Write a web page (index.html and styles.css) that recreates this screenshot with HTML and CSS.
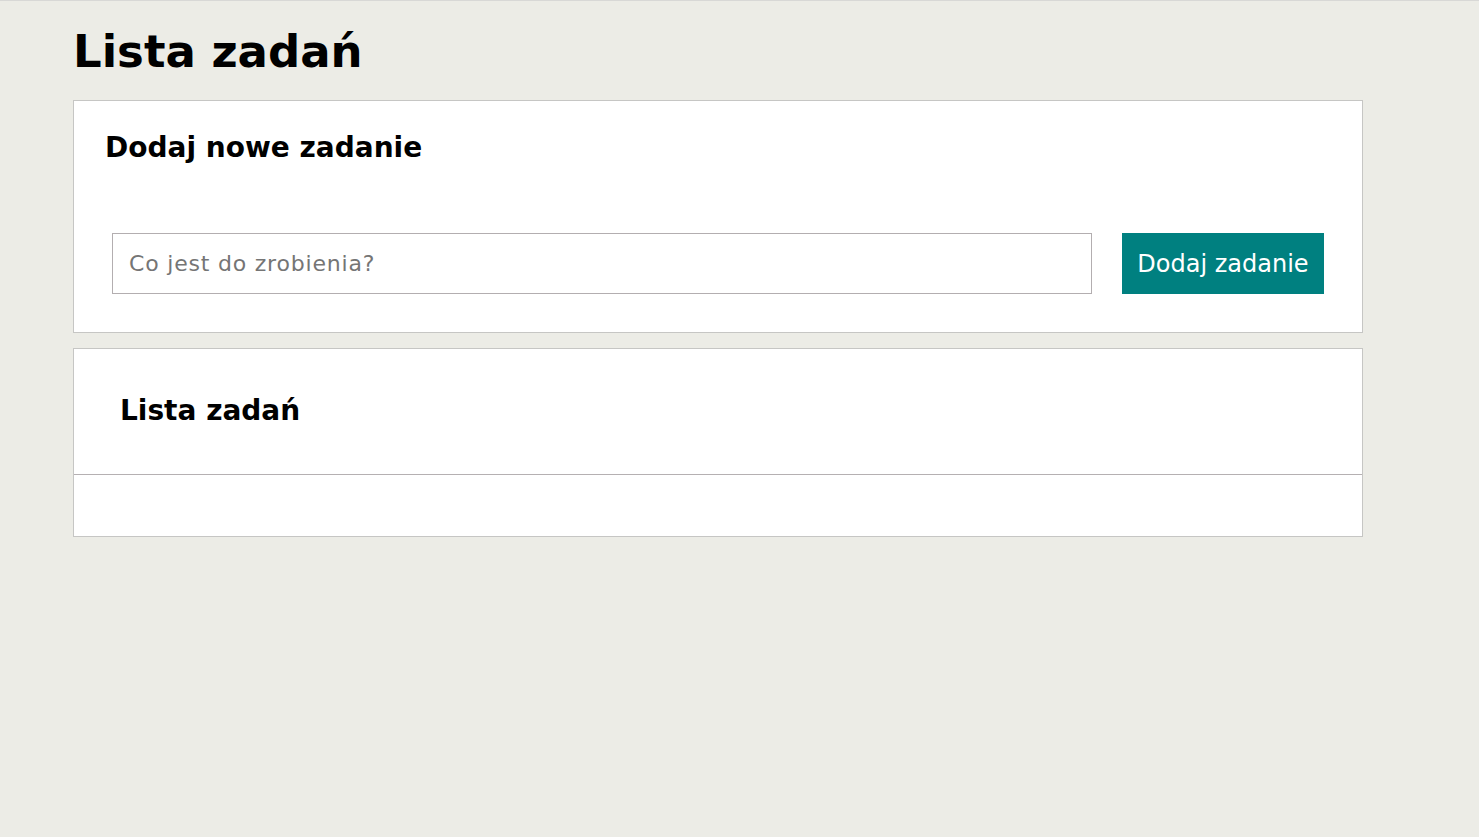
FILE: index.html
```html
<!DOCTYPE html>
<html lang="pl">
<head>
<meta charset="utf-8">
<title>Lista zadań</title>
<link rel="stylesheet" href="styles.css">
</head>
<body>
<main class="app">
  <h1 class="app-title">Lista zadań</h1>
  <section class="card add-card">
    <h2 class="card-title">Dodaj nowe zadanie</h2>
    <form class="add-form">
      <input class="add-input" type="text" placeholder="Co jest do zrobienia?">
      <button class="add-button" type="button">Dodaj zadanie</button>
    </form>
  </section>
  <section class="card list-card">
    <header class="list-header">
      <h2 class="card-title">Lista zadań</h2>
    </header>
    <ul class="task-list"></ul>
  </section>
</main>
</body>
</html>
```
FILE: styles.css
```css
* { box-sizing: border-box; }
html, body {
  margin: 0;
  padding: 0;
}
body {
  background: #ecece6;
  border-top: 1px solid #d8d8d6;
  font-family: "DejaVu Sans", "Open Sans", sans-serif;
  color: #000;
  min-height: 837px;
}
.app {
  width: 1290px;
  margin-left: 73px;
  padding-top: 23px;
}
.app-title {
  margin: 0 0 20px;
  font-size: 45px;
  line-height: 56px;
  font-weight: 700;
}
.card {
  background: #fff;
  border: 1px solid #c6c6c4;
}
.card-title {
  margin: 0;
  font-size: 28px;
  line-height: 34px;
  font-weight: 700;
}
.add-card {
  padding: 30px 0 38px;
}
.add-card .card-title {
  padding-left: 31px;
}
.add-form {
  display: flex;
  gap: 30px;
  margin-top: 68px;
  padding: 0 38px;
}
.add-input {
  flex: 1;
  height: 61px;
  border: 1px solid #b3aeb0;
  padding: 0 16px;
  font-family: inherit;
  font-size: 22px;
  letter-spacing: 0.8px;
  color: #222;
  background: #fff;
  outline: none;
}
.add-input::placeholder {
  color: #757575;
}
.add-button {
  width: 202px;
  height: 61px;
  border: 0;
  background: #008080;
  color: #fff;
  font-family: inherit;
  font-size: 24px;
  padding: 0;
}
.list-card {
  margin-top: 15px;
}
.list-header {
  padding: 45px 46px 46px;
  border-bottom: 1px solid #b5b0b2;
}
.task-list {
  margin: 0;
  padding: 0;
  list-style: none;
  height: 61px;
}
```
